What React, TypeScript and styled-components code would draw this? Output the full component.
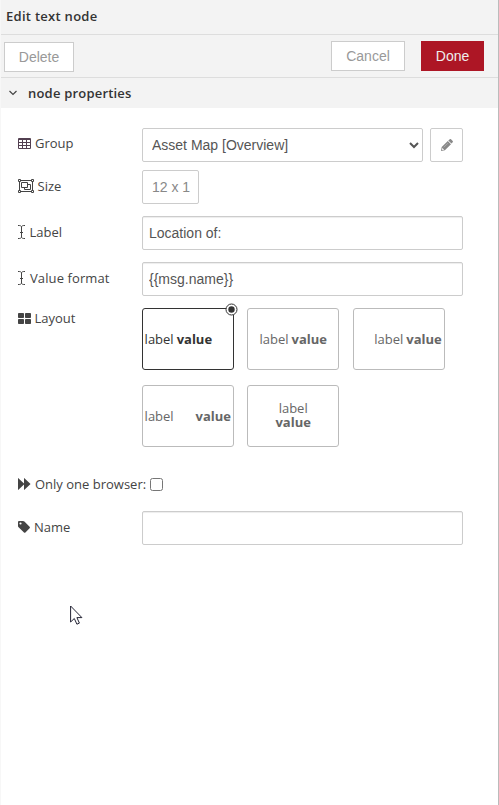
import React from "react";
import styled, { createGlobalStyle, css } from "styled-components";

const GlobalStyle = createGlobalStyle`
  *, *::before, *::after { box-sizing: border-box; }
  html, body { margin: 0; padding: 0; background: #fff; }
`;

const Panel = styled.main`
  width: 499px;
  height: 805px;
  overflow: hidden;
  background: #fff;
  border-left: 1px solid #f7f7f7;
  border-right: 1px solid #bbb;
  color: #444;
  font: 13px/20px "Open Sans", "Noto Sans", sans-serif;
`;

const Title = styled.header`
  height: 35px;
  padding: 6px 5px;
  background: #f3f3f3;
  border-bottom: 1px solid #ddd;
  color: #333;
  font-weight: 600;
  letter-spacing: 0.28px;
`;

const Toolbar = styled.div`
  display: flex;
  align-items: flex-start;
  height: 43px;
  padding: 6px 14px 0 3px;
  background: #f3f3f3;
  border-bottom: 1px solid #ddd;
`;

const Button = styled.button<{ $primary?: boolean; $width: number }>`
  width: ${(p) => p.$width}px;
  height: 30px;
  padding: 0;
  border: 1px solid ${(p) => (p.$primary ? "#ad1625" : "#ccc")};
  background: ${(p) => (p.$primary ? "#ad1625" : "#fff")};
  color: ${(p) => (p.$primary ? "#eee" : "#999")};
  font: 14px/28px "Liberation Sans", Arial, sans-serif;
`;

const DeleteButton = styled(Button)`
  margin: 1px auto 0 0;
`;

const DoneButton = styled(Button)`
  margin-left: 16px;
`;

const SectionHeader = styled.div`
  display: flex;
  align-items: center;
  height: 30px;
  padding: 0 0 0 8px;
  gap: 11px;
  background: #f3f3f3;
  color: #333;
  font-weight: 600;
  letter-spacing: 0.2px;
`;

const Form = styled.div`
  padding: 20px 35px 0 17px;
`;

const Row = styled.div<{ $gap: number }>`
  display: flex;
  align-items: flex-start;
  margin-bottom: ${(p) => p.$gap}px;
`;

const Label = styled.label<{ $top?: number; $gap?: number; $spacing?: number }>`
  display: flex;
  align-items: center;
  gap: ${(p) => p.$gap ?? 4}px;
  width: 124px;
  height: 20px;
  margin-top: ${(p) => p.$top ?? 6}px;
  flex: none;
  white-space: nowrap;
  letter-spacing: ${(p) => p.$spacing ?? 0}px;
  svg { flex: none; }
`;

const control = css`
  height: 34px;
  border: 1px solid #ccc;
  border-radius: 2px;
  background: #fff;
  color: #555;
  font: 14px/20px "Liberation Sans", Arial, sans-serif;
  outline: none;
`;

const Input = styled.input`
  ${control}
  width: 321px;
  padding: 0 6px;
  box-shadow: inset 0 1px 1px rgba(0, 0, 0, 0.075);
`;

const Select = styled.select`
  ${control}
  width: 281px;
  padding: 0 0 0 5px;
`;

const SmallButton = styled.button<{ $width: number }>`
  ${control}
  display: flex;
  align-items: center;
  justify-content: center;
  width: ${(p) => p.$width}px;
  padding: 0;
  color: #888;
`;

const SizeButton = styled(SmallButton)`
  padding: 0 0 1px 1px;
`;

const EditButton = styled(SmallButton)`
  margin-left: 7px;
`;

const Cards = styled.div`
  display: flex;
  flex-wrap: wrap;
  gap: 15px 13.4px;
  width: 320px;
`;

type Align = "flex-start" | "center" | "flex-end" | "space-between";

const Card = styled.div<{ $align: Align; $stacked?: boolean; $selected?: boolean }>`
  position: relative;
  display: flex;
  flex-direction: ${(p) => (p.$stacked ? "column" : "row")};
  align-items: center;
  justify-content: ${(p) => p.$align};
  gap: ${(p) => (p.$stacked ? 0 : 3)}px;
  width: 92px;
  height: 62px;
  padding: 0 2px ${(p) => (p.$stacked ? 2 : 0)}px 1.6px;
  border: 1px solid ${(p) => (p.$selected ? "#333" : "#bbb")};
  border-radius: 3px;
  color: ${(p) => (p.$selected ? "#333" : "#666")};
  line-height: ${(p) => (p.$stacked ? 14 : 20)}px;
`;

const Value = styled.b`
  font-weight: 700;
`;

const Marker = styled.svg`
  position: absolute;
  top: -6px;
  right: -5px;
`;

const BrowserOption = styled.label`
  display: flex;
  align-items: center;
  gap: 4px;
  height: 20px;
`;

const Check = styled.input`
  width: 13px;
  height: 13px;
  margin: 0;
`;

const Pointer = styled.svg`
  position: absolute;
  left: 70px;
  top: 605px;
`;

const TableIcon = () => (
  <svg width="13" height="11" viewBox="0 0 13 11">
    <path fill="#523f50" fillRule="evenodd" d="M1 0h11q1 0 1 1v9q0 1-1 1H1q-1 0-1-1V1q0-1 1-1zM1 2v2h3V2zM5 2v2h3V2zM9 2v2h3V2zM1 5v2h3V5zM5 5v2h3V5zM9 5v2h3V5zM1 8v2h3V8zM5 8v2h3V8zM9 8v2h3V8z" />
  </svg>
);

const GroupIcon = () => (
  <svg width="16" height="14" viewBox="0 0 16 14" fill="none" stroke="#444">
    <path d="M3 1.5h10M3 12.5h10M1.5 3v8M14.5 3v8M.5.5h2v2h-2zM13.5.5h2v2h-2zM.5 11.5h2v2h-2zM13.5 11.5h2v2h-2zM3.5 3.5h6v5h-6zM9.5 5.5h3v5h-6v-2" />
  </svg>
);

const CursorIcon = () => (
  <svg width="7" height="14" viewBox="0 0 7 14" fill="none" stroke="#444">
    <path d="M0 .5h1.3q1.2 0 2.2 1 1-1 2.2-1H7M0 13.5h1.3q1.2 0 2.2-1 1 1 2.2 1H7M3.5 1.5v11M2 7.5h3" />
  </svg>
);

const LayoutIcon = () => (
  <svg width="13" height="11" viewBox="0 0 13 11" fill="#444">
    <rect width="6" height="5" rx=".8" />
    <rect x="7" width="6" height="5" rx=".8" />
    <rect y="6" width="6" height="5" rx=".8" />
    <rect x="7" y="6" width="6" height="5" rx=".8" />
  </svg>
);

const ForwardIcon = () => (
  <svg width="13" height="12" viewBox="0 0 13 12" fill="#444">
    <path d="M0 .3Q0-.2.4.2L6 5.4V.3q0-.5.4-.1l5.9 5.5q.3.3 0 .6l-5.9 5.5q-.4.4-.4-.1V6.6L.4 11.8q-.4.4-.4-.1z" />
  </svg>
);

const TagIcon = () => (
  <svg width="12" height="12" viewBox="0 0 12 12" fill="#444">
    <path fillRule="evenodd" d="M1 0h4q.8 0 1.4.6l5.2 5.2q.7.7 0 1.4l-4.2 4.3q-.7.7-1.4 0L.6 6.2Q0 5.6 0 4.9V1q0-1 1-1zm1.5 1.4a1.1 1.1 0 1 0 0 2.2 1.1 1.1 0 0 0 0-2.2z" />
  </svg>
);

const PencilIcon = () => (
  <svg width="12" height="12" viewBox="0 0 12 12">
    <path fill="#888" fillRule="evenodd" d="M0 12l.7-3.9L6.8 2l3.2 3.2-6.1 6.1zM1.3 9.2l-.3 1.2.6.6 1.2-.3v-.8H2.1v-.7zM7.3 1.5L8.8.2q.6-.5 1.2.1l1.7 1.7q.5.6 0 1.2l-1.3 1.4z" />
    <path d="M2.8 8.3L7 4.1" stroke="#ccc" strokeWidth=".5" />
  </svg>
);

export default function App() {
  return (
    <>
      <GlobalStyle />
      <Panel>
        <Title>Edit text node</Title>
        <Toolbar>
          <DeleteButton $width={70}>Delete</DeleteButton>
          <Button $width={74}>Cancel</Button>
          <DoneButton $primary $width={63}>Done</DoneButton>
        </Toolbar>
        <SectionHeader>
          <svg width="8" height="6" viewBox="0 0 8 6" fill="none" stroke="#444" strokeWidth="1.2">
            <path d="M.5 1L4 4.5 7.5 1" />
          </svg>
          node properties
        </SectionHeader>
        <Form>
          <Row $gap={8}>
            <Label $top={5}><TableIcon />Group</Label>
            <Select defaultValue="asset">
              <option value="asset">Asset Map [Overview]</option>
            </Select>
            <EditButton $width={33} aria-label="Edit group"><PencilIcon /></EditButton>
          </Row>
          <Row $gap={12}>
            <Label $gap={3.5}><GroupIcon />Size</Label>
            <SizeButton $width={57}>12 x 1</SizeButton>
          </Row>
          <Row $gap={12}>
            <Label $gap={4.5}><CursorIcon />Label</Label>
            <Input defaultValue="Location of:" />
          </Row>
          <Row $gap={12}>
            <Label $gap={5} $spacing={0.1}><CursorIcon />Value format</Label>
            <Input defaultValue="{{msg.name}}" />
          </Row>
          <Row $gap={27}>
            <Label $top={0} $gap={3.5}><LayoutIcon />Layout</Label>
            <Cards>
              <Card $align="flex-start" $selected>
                <span>label</span><Value>value</Value>
                <Marker width="13" height="13" viewBox="0 0 13 13">
                  <circle cx="6.5" cy="6.5" r="5.5" fill="#fff" stroke="#333" />
                  <circle cx="6.5" cy="6.5" r="3.2" fill="#333" />
                </Marker>
              </Card>
              <Card $align="center"><span>label</span><Value>value</Value></Card>
              <Card $align="flex-end"><span>label</span><Value>value</Value></Card>
              <Card $align="space-between"><span>label</span><Value>value</Value></Card>
              <Card $align="center" $stacked><span>label</span><Value>value</Value></Card>
            </Cards>
          </Row>
          <Row $gap={17}>
            <BrowserOption>
              <ForwardIcon />Only one browser:
              <Check type="checkbox" />
            </BrowserOption>
          </Row>
          <Row $gap={0}>
            <Label><TagIcon />Name</Label>
            <Input aria-label="Name" />
          </Row>
        </Form>
        <Pointer width="13" height="20" viewBox="0 0 13 20">
          <path d="M.6 1v16l3.7-3.5 2.6 5.7 2.5-1.1-2.5-5.5h5z" fill="#fff" stroke="#223" />
        </Pointer>
      </Panel>
    </>
  );
}
